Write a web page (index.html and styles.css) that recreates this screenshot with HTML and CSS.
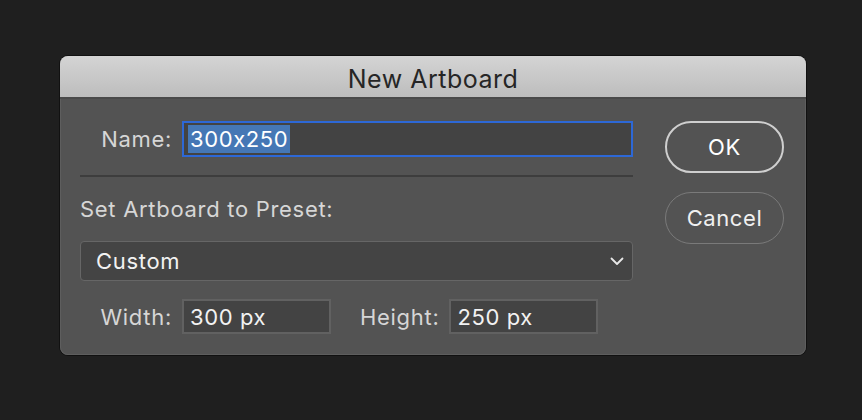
FILE: index.html
```html
<!DOCTYPE html>
<html>
<head>
        <meta charset="UTF-8">
        <title>New Artboard</title>
        <link rel="stylesheet" href="styles.css">
</head>
<body>
        <div class="dialog">
                <div class="title-bar">New Artboard</div>
                <div class="dialog-body">
                        <div class="fields">
                                <div class="row name-row">
                                        <label class="label" for="nameInput">Name:</label>
                                        <div class="text-box name-box" id="nameInput"><span class="selected">300x250</span></div>
                                </div>
                                <hr class="divider">
                                <div class="preset-label">Set Artboard to Preset:</div>
                                <div class="select-box">
                                        <span>Custom</span>
                                        <svg class="chevron" viewBox="0 0 14 9" width="14" height="9">
                                                <path d="M1.5 1.5 L7 7 L12.5 1.5" fill="none" stroke="#e8e8e8" stroke-width="1.8" stroke-linecap="round" stroke-linejoin="round" />
                                        </svg>
                                </div>
                                <div class="row size-row">
                                        <label class="label">Width:</label>
                                        <div class="text-box size-box">300 px</div>
                                        <label class="label height-label">Height:</label>
                                        <div class="text-box size-box">250 px</div>
                                </div>
                        </div>
                        <div class="buttons">
                                <div class="button default">OK</div>
                                <div class="button">Cancel</div>
                        </div>
                </div>
        </div>
</body>
</html>
```

FILE: styles.css
```css
body {
    margin: 0px;
    padding: 56px 0px 0px 60px;
    background-color: #1f1f1f;
    font-family: Inter, 'Liberation Sans', sans-serif;
    font-feature-settings: "calt" 0;
    height: 420px;
    box-sizing: border-box;
    overflow: hidden;
}

.dialog {
    width: 746px;
    height: 299px;
    box-sizing: border-box;
    background-color: #535353;
    border-radius: 8px;
    overflow: hidden;
    box-shadow: 0 0 0 1px #111111, inset 0 0 0 1px #5e5e5e;
    display: flex;
    flex-direction: column;
}

.title-bar {
    height: 41px;
    background: linear-gradient(#d4d4d4, #bdbdbd);
    border-bottom: 2px solid #4a4a4a;
    color: #262626;
    font-size: 25px;
    letter-spacing: 0.5px;
    text-align: center;
    line-height: 47px;
}

.dialog-body {
    flex: 1;
    display: flex;
    padding: 22px 22px 0px 20px;
    gap: 32px;
}

.fields {
    width: 554px;
    display: flex;
    flex-direction: column;
}

.row {
    display: flex;
    align-items: center;
}

.label {
    width: 102px;
    box-sizing: border-box;
    padding-right: 10px;
    text-align: right;
    color: #d6d6d6;
    font-size: 22px;
    letter-spacing: 0.7px;
}

.text-box {
    background-color: #434343;
    color: #f2f2f2;
    font-size: 22px;
    letter-spacing: 0.6px;
    box-sizing: border-box;
    display: flex;
    align-items: center;
}

.name-box {
    flex: 1;
    height: 36px;
    border: 2px solid #2d68d6;
    padding-left: 4px;
}

.selected {
    background-color: #4577b5;
    color: #ffffff;
    padding: 0px 2px;
    line-height: 28px;
}

.divider {
    border: 0;
    height: 2px;
    background-color: #3d3d3d;
    margin: 18px 0px 0px 0px;
}

.preset-label {
    color: #d6d6d6;
    font-size: 22px;
    letter-spacing: 0.7px;
    margin-top: 19px;
    line-height: 26px;
}

.select-box {
    margin-top: 19px;
    height: 40px;
    box-sizing: border-box;
    border: 1.5px solid #666666;
    border-radius: 4px;
    background-color: #444444;
    color: #f2f2f2;
    font-size: 22px;
    letter-spacing: 0.7px;
    display: flex;
    align-items: center;
    justify-content: space-between;
    padding: 0px 8px 0px 15px;
}

.size-row {
    margin-top: 18px;
}

.size-box {
    width: 149px;
    height: 35px;
    border: 2px solid #616161;
    padding-left: 6px;
}

.height-label {
    width: auto;
    margin-left: 29px;
}

.buttons {
    display: flex;
    flex-direction: column;
    gap: 19px;
}

.button {
    width: 119px;
    height: 52px;
    box-sizing: border-box;
    border-radius: 26px;
    border: 1.5px solid #7a7a7a;
    color: #f0f0f0;
    font-size: 22px;
    letter-spacing: 0.6px;
    display: flex;
    align-items: center;
    justify-content: center;
}

.button.default {
    border: 2px solid #cfcfcf;
    color: #ffffff;
}
```
